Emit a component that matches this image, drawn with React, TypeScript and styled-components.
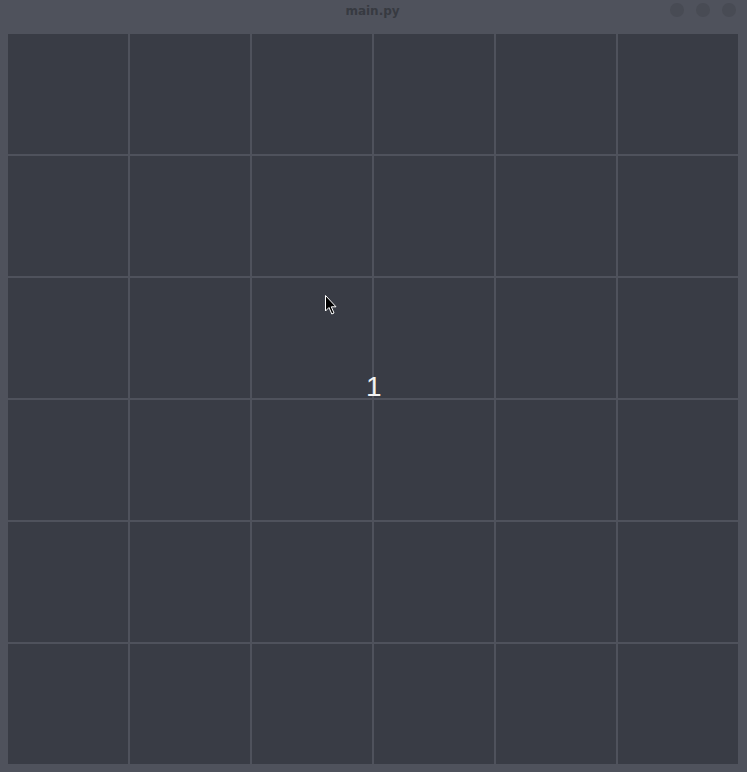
import React from "react";
import styled, { createGlobalStyle } from "styled-components";

const Global = createGlobalStyle`
  html, body { margin: 0; padding: 0; background: #4f525c; }
  #root { width: 747px; height: 772px; }
`;

const Window = styled.div`
  position: relative;
  width: 747px;
  height: 772px;
  background: #4f525c;
  display: flex;
  flex-direction: column;
  overflow: hidden;
`;

const TitleBar = styled.div`
  position: relative;
  height: 34px;
  display: flex;
  justify-content: center;
  align-items: flex-start;
`;

const Title = styled.div`
  margin-top: 3px;
  font-family: "DejaVu Sans", "Noto Sans", sans-serif;
  font-weight: bold;
  font-size: 12px;
  line-height: 16px;
  color: #373a41;
  padding-right: 2px;
`;

const Controls = styled.div`
  position: absolute;
  right: 11px;
  top: 3px;
  display: flex;
  gap: 12px;
`;

const Dot = styled.div`
  width: 14px;
  height: 14px;
  border-radius: 50%;
  background: #484b54;
`;

const Board = styled.div`
  margin-left: 8px;
  display: grid;
  grid-template-columns: repeat(6, 120px);
  grid-auto-rows: 120px;
  gap: 2px;
  width: 730px;
`;

const Cell = styled.div`
  background: #393c45;
`;

const Number = styled.div`
  position: absolute;
  left: 366px;
  top: 371px;
  font-family: "Liberation Sans", Arial, sans-serif;
  font-size: 28px;
  line-height: 32px;
  color: #f2f2f2;
`;

const Pointer = styled.svg`
  position: absolute;
  left: 325px;
  top: 295px;
`;

export default function App() {
  const cells = Array.from({ length: 36 }, (_, i) => i);
  return (
    <>
      <Global />
      <Window>
        <TitleBar>
          <Title>main.py</Title>
          <Controls>
            <Dot />
            <Dot />
            <Dot />
          </Controls>
        </TitleBar>
        <Board>
          {cells.map((i) => (
            <Cell key={i} />
          ))}
        </Board>
        <Number>1</Number>
        <Pointer width="14" height="22" viewBox="0 0 14 22">
          <path
            d="M0.5 0.5 L0.5 16 L4 12.5 L6.8 19 L9 18 L6.3 11.8 L11 11.8 Z"
            fill="#000"
            stroke="#fff"
            strokeWidth="1"
            strokeLinejoin="round"
          />
        </Pointer>
      </Window>
    </>
  );
}
